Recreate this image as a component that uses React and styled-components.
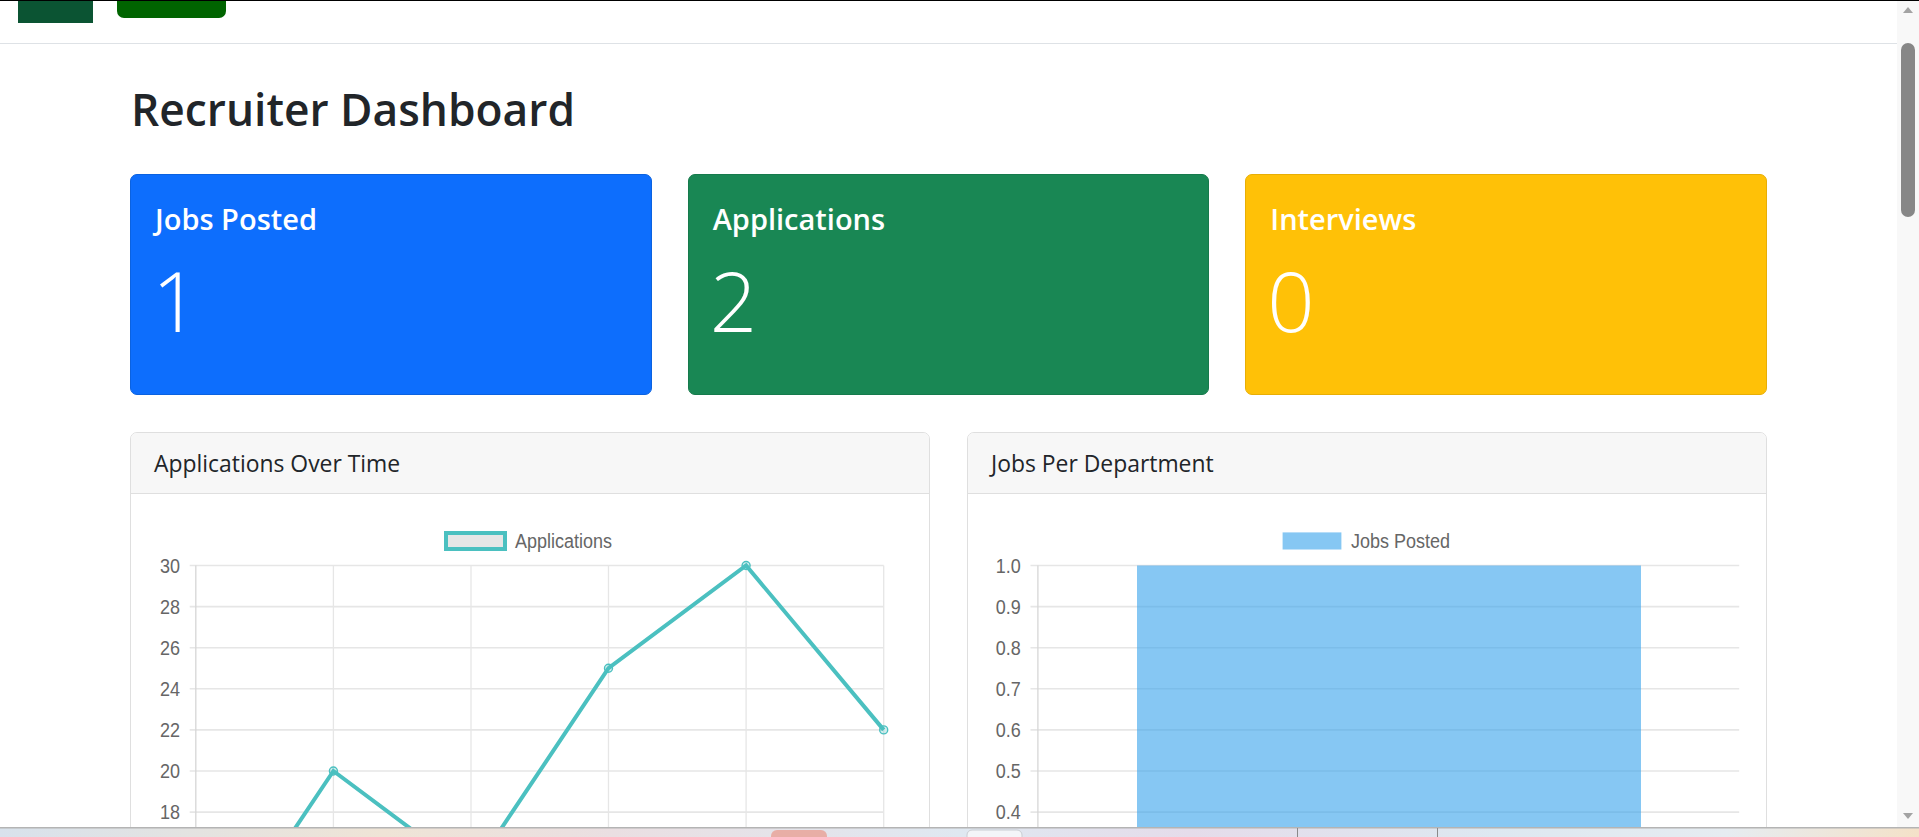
import React from "react";
import styled, { createGlobalStyle } from "styled-components";

const GlobalStyle = createGlobalStyle`
  html, body { margin: 0; padding: 0; height: 837px; overflow: hidden; background: #fff; }
  body { font-family: "Open Sans", "Noto Sans", sans-serif; color: #212529; }
  #root { height: 837px; }
`;

const Screen = styled.div`
  display: flex;
  flex-direction: column;
  width: 1919px;
  height: 837px;
  overflow: hidden;
`;

const Viewport = styled.div`
  flex: 0 0 827px;
  display: flex;
  border-top: 1px solid #000;
  box-sizing: border-box;
  overflow: hidden;
`;

const Page = styled.main`
  flex: 1;
  min-width: 0;
  overflow: hidden;
  background: #fff;
`;

const Navbar = styled.nav`
  height: 42px;
  border-bottom: 1px solid #dee2e6;
  display: flex;
  align-items: flex-start;
  gap: 24px;
  padding-left: 18px;
`;

const Brand = styled.div`
  width: 75px;
  height: 22px;
  background: #0b5433;
`;

const NavButton = styled.div`
  width: 109px;
  height: 17px;
  background: #006400;
  border-radius: 0 0 7px 7px;
`;

const Container = styled.div`
  margin-left: 130px;
  width: 1637px;
`;

const Title = styled.h1`
  margin: 37px 0 0;
  padding-left: 1px;
  font-size: 44.3px;
  line-height: 56px;
  font-weight: 600;
  color: #212529;
`;

const StatRow = styled.div`
  display: grid;
  grid-template-columns: repeat(3, 1fr);
  gap: 36px;
  margin-top: 37px;
`;

const StatCard = styled.div`
  box-sizing: border-box;
  height: 221px;
  padding: 26px 24px 21px;
  background: ${(p) => p.$bg};
  border: 1px solid ${(p) => p.$border};
  border-radius: 7px;
  color: #fff;
`;

const StatTitle = styled.h4`
  margin: 0 0 10px;
  font-size: 29px;
  line-height: 36px;
  font-weight: 600;
`;

const StatValue = styled.p`
  margin: 0 0 0 -3px;
  font-size: 83px;
  line-height: 106px;
  font-weight: 300;
`;

const ChartRow = styled.div`
  display: grid;
  grid-template-columns: 1fr 1fr;
  gap: 37px;
  margin-top: 37px;
`;

const Panel = styled.section`
  height: 520px;
  border: 1px solid #dfdfdf;
  border-radius: 7px;
  overflow: hidden;
  background: #fff;
`;

const PanelHeader = styled.header`
  height: 60px;
  display: flex;
  align-items: center;
  padding: 0 23px;
  background: #f7f7f7;
  border-bottom: 1px solid #dfdfdf;
  font-size: 22.9px;
  line-height: 27px;
  color: #212529;
`;

const ChartSvg = styled.svg`
  display: block;
  width: 100%;
  height: 400px;
  font-family: "Liberation Sans", Arial, sans-serif;
`;

const Scrollbar = styled.div`
  flex: 0 0 22px;
  display: flex;
  flex-direction: column;
  background: #f8f8f8;
`;

const ScrollArrow = styled.div`
  height: ${(p) => p.$h}px;
  display: flex;
  align-items: center;
  justify-content: center;
`;

const ScrollTrack = styled.div`
  flex: 1;
  display: flex;
  justify-content: center;
`;

const Thumb = styled.div`
  width: 14px;
  height: 174px;
  margin-top: 25px;
  background: #878787;
  border-radius: 7px;
`;

const Taskbar = styled.svg`
  display: block;
  flex: 0 0 10px;
  width: 1919px;
  height: 10px;
`;

const GRID = "#e6e6e6";
const AXIS = "#d6d6d6";
const LABEL = "#666";
const VISIBLE_BOTTOM = 826;

function Label({ x, y, children, anchor = "end" }) {
  return (
    <text
      transform={`translate(${x} ${y}) scale(1 1.14)`}
      textAnchor={anchor}
      fontSize="18"
      fill={LABEL}
    >
      {children}
    </text>
  );
}

function LineChart() {
  const yOf = (v) => 565.5 + (30 - v) * 20.55;
  const xs = [195.8, 333.4, 471.0, 608.5, 746.1, 883.7];
  const data = [10, 20, 15, 25, 30, 22];
  const ticks = [30, 28, 26, 24, 22, 20, 18, 16, 14, 12, 10];
  const pts = xs.map((x, i) => `${x},${yOf(data[i])}`).join(" ");
  return (
    <ChartSvg>
      <g transform="translate(-131 -494)">
        <rect x="446" y="533" width="59" height="16" fill="#e6e6e6" stroke="rgb(75,192,192)" strokeWidth="4" />
        <Label x={515} y={548} anchor="start">Applications</Label>
        {ticks.map((v) => (
          <g key={v}>
            <line x1="189.7" x2="883.7" y1={yOf(v)} y2={yOf(v)} stroke={GRID} strokeWidth="1.6" />
            {yOf(v) + 7 < VISIBLE_BOTTOM && <Label x={180} y={yOf(v) + 7}>{v}</Label>}
          </g>
        ))}
        {xs.map((x, i) => (
          <line key={x} x1={x} x2={x} y1="565.5" y2="995" stroke={i === 0 ? AXIS : GRID} strokeWidth="1.3" />
        ))}
        <polyline points={pts} fill="none" stroke="rgb(75,192,192)" strokeWidth="4" strokeLinejoin="miter" />
        {xs.map((x, i) => (
          <circle key={x} cx={x} cy={yOf(data[i])} r="4" fill="rgba(75,192,192,0.25)" stroke="rgb(75,192,192)" strokeWidth="1.4" />
        ))}
      </g>
    </ChartSvg>
  );
}

function BarChart() {
  const yOf = (v) => 565.5 + (1 - v) * 411;
  const ticks = [1, 0.9, 0.8, 0.7, 0.6, 0.5, 0.4, 0.3, 0.2, 0.1, 0];
  return (
    <ChartSvg>
      <g transform="translate(-968 -494)">
        <rect x="1282.6" y="532.4" width="58.8" height="17.1" fill="rgba(54,162,235,0.6)" />
        <Label x={1351} y={548} anchor="start">Jobs Posted</Label>
        {ticks.map((v) => (
          <g key={v}>
            <line x1="1030.5" x2="1739.2" y1={yOf(v)} y2={yOf(v)} stroke={GRID} strokeWidth="1.6" />
            {yOf(v) + 7 < VISIBLE_BOTTOM && (
              <Label x={1020.7} y={yOf(v) + 7}>{v === 0 ? "0" : v.toFixed(1)}</Label>
            )}
          </g>
        ))}
        <line x1="1037.9" x2="1037.9" y1="565.5" y2="995" stroke={AXIS} strokeWidth="1.3" />
        <rect x="1137" y={yOf(1)} width="504" height={411} fill="rgba(54,162,235,0.6)" />
      </g>
    </ChartSvg>
  );
}

const stats = [
  { title: "Jobs Posted", value: 1, bg: "#0d6efd", border: "#0b62e0" },
  { title: "Applications", value: 2, bg: "#198754", border: "#167a4c" },
  { title: "Interviews", value: 0, bg: "#ffc107", border: "#e8ae05" },
];

export default function App() {
  return (
    <>
      <GlobalStyle />
      <Screen>
        <Viewport>
          <Page>
            <Navbar>
              <Brand />
              <NavButton />
            </Navbar>
            <Container>
              <Title>Recruiter Dashboard</Title>
              <StatRow>
                {stats.map((s) => (
                  <StatCard key={s.title} $bg={s.bg} $border={s.border}>
                    <StatTitle>{s.title}</StatTitle>
                    <StatValue>{s.value}</StatValue>
                  </StatCard>
                ))}
              </StatRow>
              <ChartRow>
                <Panel>
                  <PanelHeader>Applications Over Time</PanelHeader>
                  <LineChart />
                </Panel>
                <Panel>
                  <PanelHeader>Jobs Per Department</PanelHeader>
                  <BarChart />
                </Panel>
              </ChartRow>
            </Container>
          </Page>
          <Scrollbar>
            <ScrollArrow $h={17}>
              <svg width="10" height="6" viewBox="0 0 10 6"><polygon points="5,0 10,6 0,6" fill="#a3a3a3" /></svg>
            </ScrollArrow>
            <ScrollTrack>
              <Thumb />
            </ScrollTrack>
            <ScrollArrow $h={23}>
              <svg width="10" height="6" viewBox="0 0 10 6"><polygon points="0,0 10,0 5,6" fill="#a3a3a3" /></svg>
            </ScrollArrow>
          </Scrollbar>
        </Viewport>
        <Taskbar viewBox="0 0 1919 10">
          <defs>
            <linearGradient id="tb" x1="0" x2="1" y1="0" y2="0">
              <stop offset="0" stopColor="#d8e2ec" />
              <stop offset="0.2" stopColor="#efe4d6" />
              <stop offset="0.32" stopColor="#eadfe2" />
              <stop offset="0.5" stopColor="#dfe8f1" />
              <stop offset="0.62" stopColor="#e5dcea" />
              <stop offset="0.78" stopColor="#dde8f1" />
              <stop offset="0.9" stopColor="#e6ecf1" />
              <stop offset="1" stopColor="#f4e1c8" />
            </linearGradient>
          </defs>
          <rect x="0" y="0" width="1919" height="10" fill="url(#tb)" />
          <rect x="0" y="0" width="1919" height="1.5" fill="#b4b4b4" />
          <rect x="771" y="3" width="56" height="12" rx="6" fill="#e8aea6" />
          <rect x="967" y="3" width="55" height="12" rx="5" fill="#f3f5f8" stroke="#c9cdd2" />
          <rect x="1297" y="1" width="1" height="9" fill="#8a8a8a" />
          <rect x="1437" y="1" width="1" height="9" fill="#8a8a8a" />
        </Taskbar>
      </Screen>
    </>
  );
}
